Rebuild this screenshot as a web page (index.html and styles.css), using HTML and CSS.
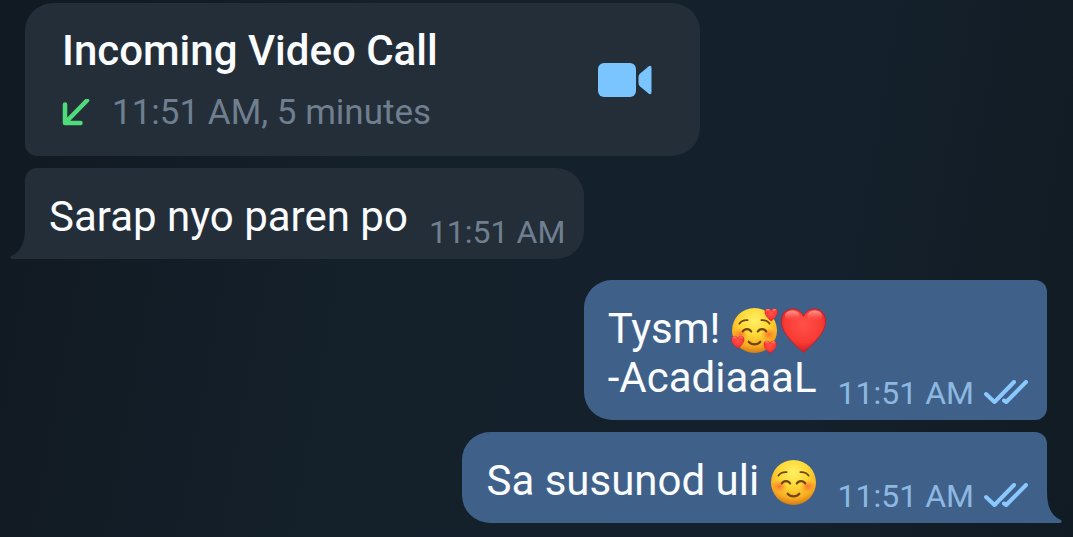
FILE: index.html
```html
<!DOCTYPE html>
<html lang="tl">
<head>
    <meta charset="UTF-8">
    <meta name="viewport" content="width=device-width, initial-scale=1.0">
    <title>Chat</title>
    <link rel="stylesheet" href="styles.css">
</head>
<body>
    <!-- Shared shapes -->
    <svg class="defs" width="0" height="0" aria-hidden="true">
        <defs>
            <radialGradient id="face" cx="50%" cy="28%" r="72%">
                <stop offset="0" stop-color="#fff064"/>
                <stop offset="0.45" stop-color="#ffd835"/>
                <stop offset="0.78" stop-color="#f9ae22"/>
                <stop offset="1" stop-color="#d67a16"/>
            </radialGradient>
            <radialGradient id="blush">
                <stop offset="0" stop-color="#f9602d" stop-opacity="0.8"/>
                <stop offset="1" stop-color="#f9792d" stop-opacity="0"/>
            </radialGradient>
            <radialGradient id="red" cx="50%" cy="35%" r="65%">
                <stop offset="0" stop-color="#ff5148"/>
                <stop offset="0.65" stop-color="#f93a35"/>
                <stop offset="1" stop-color="#d01c25"/>
            </radialGradient>
            <linearGradient id="shine" x1="0" y1="0" x2="0" y2="1">
                <stop offset="0" stop-color="#ffb0a0" stop-opacity="0.9"/>
                <stop offset="1" stop-color="#ff5148" stop-opacity="0"/>
            </linearGradient>
            <symbol id="heart" viewBox="0 0 48 48">
                <path fill="url(#red)" stroke="#c51d25" stroke-width="1" d="M24 46.500C21 43.500 15 39 9 31.500 4 25.500 1.500 20.500 1.500 14.500 1.500 7 6.500 2 13 2c4.800 0 8.800 2.800 11 7.500C26.200 4.800 30.200 2 35 2c6.500 0 11.500 5 11.500 12.500 0 6-2.500 11-7.500 17C33 39 27 43.500 24 46.500z"/>
                <ellipse cx="12.500" cy="9" rx="7.500" ry="5.500" fill="url(#shine)"/>
                <ellipse cx="35.500" cy="9" rx="7.500" ry="5.500" fill="url(#shine)"/>
            </symbol>
            <symbol id="smile" viewBox="0 0 48 48">
                <circle cx="24" cy="24" r="23" fill="url(#face)"/>
                <ellipse cx="9.500" cy="28" rx="8" ry="6.500" fill="url(#blush)"/>
                <ellipse cx="38.500" cy="28" rx="8" ry="6.500" fill="url(#blush)"/>
                <g fill="none" stroke="#70430f" stroke-width="1.800" stroke-linecap="round">
                    <path d="M8.500 17c2-2.800 5-3.800 8.500-3.500M31 13.500c3.500-.3 6.500.7 8.500 3.500"/>
                    <path stroke-width="2.200" d="M12 25c1.800-3.300 6.800-3.300 8.600 0M27.400 25c1.800-3.300 6.800-3.300 8.600 0"/>
                    <path stroke-width="2.200" d="M18 35.500c3 3.600 9 3.600 12 0"/>
                </g>
            </symbol>
            <symbol id="ticks" viewBox="0 0 44 24">
                <path fill="none" stroke="#8bc8ff" stroke-width="4" stroke-linecap="round" stroke-linejoin="round" d="M2 14l8.500 8L30 2M20 20.500l2.200 1.500L42 2"/>
            </symbol>
            <symbol id="tail" viewBox="0 0 16 32">
                <path d="M16 0v32H2c-2 0-2.200-2.500-.3-3.300C11 24.500 15 16 15 0z"/>
            </symbol>
        </defs>
    </svg>

    <main class="chat">
        <section class="group incoming">
            <article class="bubble call">
                <div class="call-info">
                    <h2 class="call-title">Incoming Video Call</h2>
                    <p class="call-meta">
                        <svg class="arrow" viewBox="0 0 28 28" aria-hidden="true">
                            <path fill="none" stroke="#4edb78" stroke-width="4.500" stroke-linecap="round" stroke-linejoin="round" d="M25 1.500L3.500 23.500M3 5.500v18.500H18.500"/>
                        </svg>
                        <span>11:51 AM, 5 minutes</span>
                    </p>
                </div>
                <button class="call-btn" type="button" aria-label="Video call">
                    <svg viewBox="0 0 54 34" aria-hidden="true">
                        <rect width="38" height="34" rx="6"/>
                        <path d="M40.500 14q0-2 1.600-3.500L50.500 3.400Q53.500 1.500 53.500 5v24q0 3.500-3 1.600L42.100 23.500q-1.600-1.500-1.600-3.500z"/>
                    </svg>
                </button>
            </article>

            <article class="bubble last">
                <p class="text">Sarap nyo paren po</p>
                <time class="time">11:51 AM</time>
                <svg class="tail" aria-hidden="true"><use href="#tail"/></svg>
            </article>
        </section>

        <section class="group outgoing">
            <article class="bubble">
                <p class="text">Tysm!
                    <span class="emojis"><svg class="emoji" viewBox="0 0 48 48" role="img" aria-label="🥰">
                        <use href="#smile" width="48" height="48"/>
                        <use href="#heart" x="34" y="1" width="14" height="14"/>
                        <use href="#heart" x="0" y="29" width="14" height="14"/>
                        <use href="#heart" x="33" y="34" width="14" height="14"/>
                    </svg><svg class="emoji" role="img" aria-label="❤️"><use href="#heart"/></svg></span><br>-AcadiaaaL</p>
                <time class="time">11:51 AM</time>
                <svg class="ticks" role="img" aria-label="Read"><use href="#ticks"/></svg>
            </article>

            <article class="bubble last">
                <p class="text">Sa susunod uli <svg class="emoji" role="img" aria-label="☺️"><use href="#smile"/></svg></p>
                <time class="time">11:51 AM</time>
                <svg class="ticks" role="img" aria-label="Read"><use href="#ticks"/></svg>
                <svg class="tail" aria-hidden="true"><use href="#tail"/></svg>
            </article>
        </section>
    </main>
</body>
</html>
```
FILE: styles.css
```css
* {
    box-sizing: border-box;
}

body {
    margin: 0;
    min-height: 100vh;
    font-family: Roboto, "Liberation Sans", sans-serif;
    background: linear-gradient(100deg, #111922 0%, #14202a 35%, #14202b 75%, #111b23 100%);
    color: #fafcff;
}

h2, p {
    margin: 0;
}

.defs {
    position: absolute;
}

.chat {
    display: flex;
    flex-direction: column;
    gap: 21px;
    padding: 3px 26px 14px 25px;
}

.group {
    display: flex;
    flex-direction: column;
    align-items: flex-start;
    gap: 12px;
}

.outgoing {
    align-items: flex-end;
}

/* Bubbles */
.bubble {
    position: relative;
    display: flex;
    align-items: flex-end;
    padding: 24px 19px 8px 24px;
    border-radius: 12px 28px 28px 12px;
    background: #232e39;
}

.outgoing .bubble {
    border-radius: 28px 12px 12px 28px;
    background: #3f6189;
}

.incoming .last {
    border-bottom-left-radius: 0;
}

.outgoing .last {
    border-bottom-right-radius: 0;
}

.text {
    margin-bottom: 10px;
    font-size: 42px;
    line-height: 49px;
}

.time {
    margin-left: 21px;
    font-size: 32px;
    line-height: 37px;
    color: #707f8f;
}

.outgoing .time {
    color: #8db8e2;
}

.ticks {
    width: 44px;
    height: 24px;
    margin: 0 0 8px 10px;
}

.tail {
    position: absolute;
    bottom: 0;
    left: -15px;
    width: 16px;
    height: 32px;
    fill: #232e39;
}

.outgoing .tail {
    left: auto;
    right: -15px;
    fill: #3f6189;
    transform: scaleX(-1);
}

/* The emoji pair may reach into the gap before the time */
.emojis {
    margin-right: -12px;
    white-space: nowrap;
}

.emoji {
    width: 47px;
    height: 47px;
    margin: -4px 0;
    vertical-align: -7px;
}

.emoji + .emoji {
    margin-left: 2px;
}

/* Call card */
.call {
    align-items: center;
    justify-content: space-between;
    width: 66%;
    padding: 23px 48px 23px 37px;
    border-radius: 28px 28px 28px 12px;
}

.call-title {
    font-size: 42px;
    font-weight: 500;
    line-height: 49px;
}

.call-meta {
    display: flex;
    align-items: center;
    gap: 22px;
    margin-top: 17px;
    font-size: 35px;
    line-height: 41px;
    color: #707f8f;
}

.arrow {
    width: 28px;
    height: 28px;
}

.call-btn {
    padding: 0;
    border: none;
    background: none;
    cursor: pointer;
}

.call-btn svg {
    display: block;
    width: 54px;
    height: 34px;
    fill: #7ac4ff;
}
```
